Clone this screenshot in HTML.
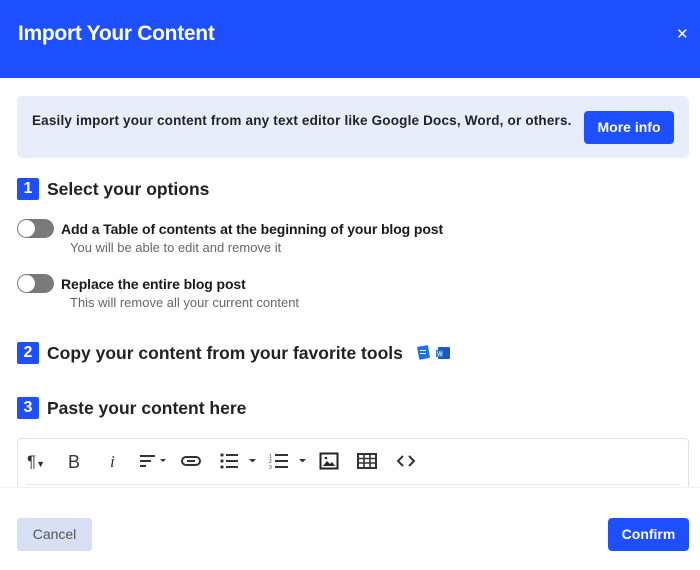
<!DOCTYPE html>
<html><head><style>
*{margin:0;padding:0;box-sizing:border-box}
body{width:700px;height:570px;background:#fff;font-family:"Liberation Sans",sans-serif;color:#1a1a1a;position:relative;overflow:hidden}
.hdr{position:absolute;left:0;top:0;width:700px;height:78px;background:#1d4fff}
.hdr h1{position:absolute;left:18px;top:22px;font-size:21px;color:#fff;font-weight:bold;letter-spacing:-0.3px}
.x{position:absolute;left:676px;top:25px;color:#fff;font-size:15px}
.ban{position:absolute;left:17px;top:96px;width:672px;height:62px;background:#e8edfc;border-radius:5px}
.ban p{position:absolute;left:15px;top:17px;font-size:13.5px;font-weight:bold;color:#222;letter-spacing:0.18px}
.btn{position:absolute;background:#1d4fff;color:#fff;border-radius:4px;font-size:14px;text-align:center;font-weight:bold}
.num{position:absolute;left:17px;width:22px;height:22px;background:#1d4fff;color:#fff;font-size:16px;font-weight:bold;text-align:center;line-height:22px;border-radius:2px}
.st{position:absolute;left:47px;font-size:17.5px;font-weight:bold;color:#222;letter-spacing:0}
.tg{position:absolute;left:17px;width:37px;height:19px;border-radius:10px;background:#7a7a7a}
.tg:after{content:"";position:absolute;left:1px;top:1px;width:17px;height:17px;border-radius:50%;background:#fff}
.ol{position:absolute;left:61px;font-size:14px;font-weight:bold;color:#1a1a1a;letter-spacing:-0.1px}
.os{position:absolute;left:70px;font-size:13px;color:#666;letter-spacing:0}
.ed{position:absolute;left:17px;top:438px;width:672px;height:60px;border:1px solid #dbe3f3;border-radius:4px}
.ed .ln{position:absolute;left:8px;right:8px;top:45px;border-top:1px solid #e6e9ef}
.foot{position:absolute;left:0;top:487px;width:700px;height:83px;background:#fff;border-top:1px solid #eef1f7}
.tb{position:absolute;top:452px;font-size:17px;color:#333}
</style></head><body>
<div class="hdr"><h1>Import Your Content</h1><div class="x">✕</div></div>
<div class="ban"><p>Easily import your content from any text editor like Google Docs, Word, or others.</p>
<div class="btn" style="left:567px;top:15px;width:90px;height:33px;line-height:33px">More info</div></div>

<div class="num" style="top:178px">1</div><div class="st" style="top:179px">Select your options</div>
<div class="tg" style="top:219px"></div><div class="ol" style="top:221px">Add a Table of contents at the beginning of your blog post</div>
<div class="os" style="top:240px">You will be able to edit and remove it</div>
<div class="tg" style="top:274px"></div><div class="ol" style="top:276px">Replace the entire blog post</div>
<div class="os" style="top:295px">This will remove all your current content</div>

<div class="num" style="top:342px">2</div><div class="st" style="top:343px">Copy your content from your favorite tools</div>
<svg style="position:absolute;left:416px;top:343px" width="38" height="20"><rect x="2" y="3" width="11" height="13" rx="1" fill="#1a73e8" transform="rotate(-10 7 9)"/><rect x="4" y="7" width="6" height="1" fill="#fff"/><rect x="4" y="10" width="6" height="1" fill="#fff"/><rect x="22" y="4" width="12" height="12" rx="1" fill="#185abd"/><rect x="20" y="7" width="7" height="7" fill="#2b7cd3"/><text x="21" y="13" font-size="6" fill="#fff" font-family="Liberation Sans">W</text></svg>

<div class="num" style="top:397px">3</div><div class="st" style="top:398px">Paste your content here</div>
<div class="ed"><div class="ln"></div></div>
<div class="tb" style="left:27px">¶<span style="font-size:9px">▼</span></div>
<div class="tb" style="left:68px;font-size:18px">B</div>
<div class="tb" style="left:110px;font-style:italic;font-family:'Liberation Serif',serif">i</div>
<svg style="position:absolute;left:138px;top:453px" width="32" height="16"><path d="M2 3h15M2 8h11M2 13h6" stroke="#333" stroke-width="2"/><path d="M22 6h6l-3 3z" fill="#333"/></svg>
<svg style="position:absolute;left:180px;top:453px" width="22" height="16"><rect x="2" y="4" width="18" height="8" rx="4" fill="none" stroke="#333" stroke-width="2"/><path d="M7 8h8" stroke="#333" stroke-width="2"/></svg>
<svg style="position:absolute;left:219px;top:452px" width="42" height="18"><g fill="#333"><circle cx="3" cy="3" r="1.6"/><circle cx="3" cy="9" r="1.6"/><circle cx="3" cy="15" r="1.6"/></g><path d="M7 3h12M7 9h12M7 15h12" stroke="#333" stroke-width="2"/><path d="M30 7h7l-3.5 3.5z" fill="#333"/></svg>
<svg style="position:absolute;left:269px;top:452px" width="42" height="18"><text x="0" y="6" font-size="5" fill="#333">1</text><text x="0" y="11" font-size="5" fill="#333">2</text><text x="0" y="17" font-size="5" fill="#333">3</text><path d="M6 3h13M6 9h13M6 15h13" stroke="#333" stroke-width="2"/><path d="M30 7h7l-3.5 3.5z" fill="#333"/></svg>
<svg style="position:absolute;left:319px;top:452px" width="20" height="18"><rect x="1.5" y="1.5" width="17" height="15" fill="none" stroke="#222" stroke-width="2"/><path d="M4 14l4-5 3 3 2-2 3 4z" fill="#222"/><circle cx="7" cy="6" r="1.3" fill="#222"/></svg>
<svg style="position:absolute;left:357px;top:453px" width="20" height="16"><rect x="1" y="1" width="18" height="14" fill="none" stroke="#333" stroke-width="2"/><path d="M1 5.5h18M1 10h18M7 1v14M13 1v14" stroke="#333" stroke-width="1.6"/></svg>
<svg style="position:absolute;left:396px;top:453px" width="20" height="16"><path d="M7 3l-5 5 5 5M13 3l5 5-5 5" fill="none" stroke="#333" stroke-width="2"/></svg>

<div class="foot"></div>
<div style="position:absolute;left:17px;top:518px;width:75px;height:33px;background:#d6e0f2;border-radius:3px;color:#555;font-size:14px;text-align:center;line-height:33px">Cancel</div>
<div class="btn" style="left:608px;top:518px;width:81px;height:33px;line-height:33px">Confirm</div>
</body></html>
